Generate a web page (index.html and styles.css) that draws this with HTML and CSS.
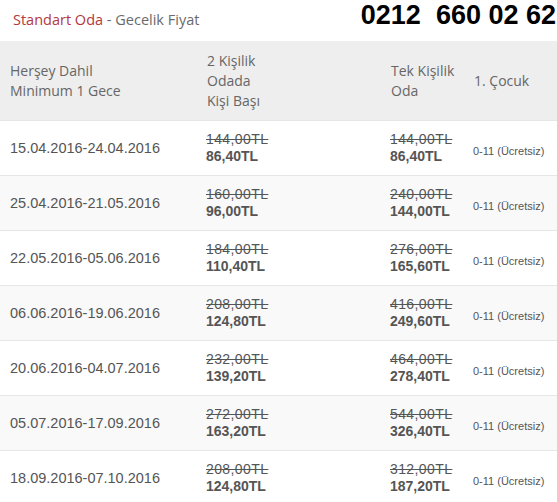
FILE: index.html
```html
<!DOCTYPE html>
<html lang="tr">
<head>
<meta charset="utf-8">
<link rel="stylesheet" href="styles.css">
</head>
<body>
<div class="top">
  <div class="title"><span class="red">Standart Oda</span> - Gecelik Fiyat</div>
  <div class="phone">0212&nbsp; 660 02 62</div>
</div>
<table class="prices">
  <colgroup>
    <col class="c1"><col class="c2"><col class="c3"><col class="c4">
  </colgroup>
  <thead>
    <tr>
      <th class="first">Herşey Dahil<br>Minimum 1 Gece</th>
      <th>2 Kişilik<br>Odada<br>Kişi Başı</th>
      <th>Tek Kişilik<br>Oda</th>
      <th>1. Çocuk</th>
    </tr>
  </thead>
  <tbody>
    <tr><td class="date">15.04.2016-24.04.2016</td><td><s>144,00TL</s><b>86,40TL</b></td><td><s>144,00TL</s><b>86,40TL</b></td><td class="kid">0-11 (Ücretsiz)</td></tr>
    <tr><td class="date">25.04.2016-21.05.2016</td><td><s>160,00TL</s><b>96,00TL</b></td><td><s>240,00TL</s><b>144,00TL</b></td><td class="kid">0-11 (Ücretsiz)</td></tr>
    <tr><td class="date">22.05.2016-05.06.2016</td><td><s>184,00TL</s><b>110,40TL</b></td><td><s>276,00TL</s><b>165,60TL</b></td><td class="kid">0-11 (Ücretsiz)</td></tr>
    <tr><td class="date">06.06.2016-19.06.2016</td><td><s>208,00TL</s><b>124,80TL</b></td><td><s>416,00TL</s><b>249,60TL</b></td><td class="kid">0-11 (Ücretsiz)</td></tr>
    <tr><td class="date">20.06.2016-04.07.2016</td><td><s>232,00TL</s><b>139,20TL</b></td><td><s>464,00TL</s><b>278,40TL</b></td><td class="kid">0-11 (Ücretsiz)</td></tr>
    <tr><td class="date">05.07.2016-17.09.2016</td><td><s>272,00TL</s><b>163,20TL</b></td><td><s>544,00TL</s><b>326,40TL</b></td><td class="kid">0-11 (Ücretsiz)</td></tr>
    <tr><td class="date">18.09.2016-07.10.2016</td><td><s>208,00TL</s><b>124,80TL</b></td><td><s>312,00TL</s><b>187,20TL</b></td><td class="kid">0-11 (Ücretsiz)</td></tr>
  </tbody>
</table>
</body>
</html>
```
FILE: styles.css
```css
html, body {
  margin: 0;
  padding: 0;
  background: #fff;
}
body {
  width: 557px;
  overflow: hidden;
}
.top {
  height: 41px;
  display: flex;
  justify-content: space-between;
  align-items: flex-start;
}
.title {
  font-family: "Open Sans", sans-serif;
  font-size: 14.5px;
  color: #6a6a6a;
  padding: 10px 0 0 13px;
  line-height: 20px;
}
.title .red {
  color: #b3373d;
}
.phone {
  font-family: "Liberation Sans", Arial, sans-serif;
  font-weight: bold;
  font-size: 27px;
  line-height: 30px;
  color: #000;
  padding-top: 0;
  margin-right: 1px;
  white-space: nowrap;
}
.prices {
  width: 557px;
  border-collapse: collapse;
  table-layout: fixed;
}
.c1 { width: 198px; }
.c2 { width: 184px; }
.c3 { width: 83px; }
.c4 { width: 92px; }
.prices th {
  background: #eeeeee;
  font-family: "Open Sans", sans-serif;
  font-weight: normal;
  font-size: 14px;
  line-height: 20px;
  color: #666;
  text-align: left;
  padding: 10px 0 9px 9px;
  height: 60px;
  vertical-align: middle;
}
.prices th.first {
  padding-left: 10px;
}
.prices tbody tr {
  height: 55px;
}
.prices td {
  padding: 0 0 0 8px;
  border-top: 1px solid #e6e6e6;
  font-family: "Liberation Sans", Arial, sans-serif;
  color: #555;
  vertical-align: middle;
}
.prices tbody tr:nth-child(even) td {
  background: #f9f9f9;
}
.prices td.date {
  padding-left: 10px;
  font-size: 14.5px;
}
.prices s,
.prices b {
  display: block;
  font-size: 14px;
  line-height: 17px;
}
.prices s {
  font-weight: normal;
  letter-spacing: 0.4px;
}
.prices td.kid {
  font-size: 11px;
  padding-top: 6px;
  padding-left: 8px;
}
```
